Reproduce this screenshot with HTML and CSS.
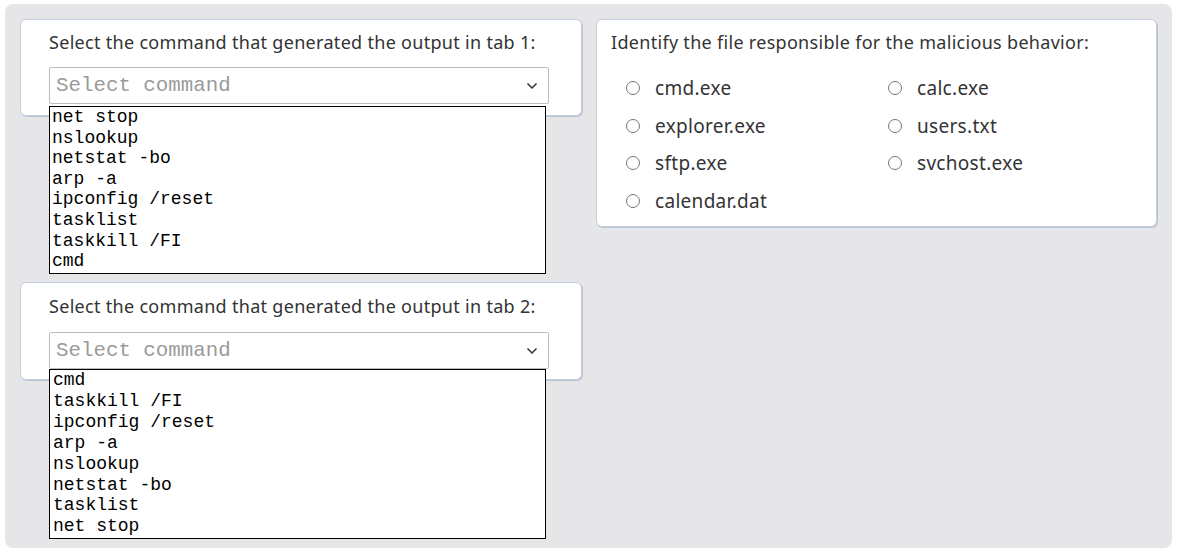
FILE: index.html
```html
<!DOCTYPE html>
<html lang="en">
<head>
    <meta charset="UTF-8">
    <meta name="viewport" content="width=device-width, initial-scale=1.0">
    <title>Select command</title>
    <link rel="stylesheet" href="styles.css">
</head>
<body>
    <div class="panel">
        <div class="col-left">
            <section class="card card-select">
                <p class="prompt">Select the command that generated the output in tab 1:</p>
                <div class="dropdown">
                    <div class="select">
                        <span>Select command</span>
                        <svg class="chevron" width="12" height="8" viewBox="0 0 12 8"><path d="M1.5 1.5 L6 6 L10.5 1.5" fill="none" stroke="#333" stroke-width="1.5"/></svg>
                    </div>
                    <ul class="options">
                        <li>net stop</li>
                        <li>nslookup</li>
                        <li>netstat -bo</li>
                        <li>arp -a</li>
                        <li>ipconfig /reset</li>
                        <li>tasklist</li>
                        <li>taskkill /FI</li>
                        <li>cmd</li>
                    </ul>
                </div>
            </section>
            <section class="card card-select card-second">
                <p class="prompt">Select the command that generated the output in tab 2:</p>
                <div class="dropdown">
                    <div class="select">
                        <span>Select command</span>
                        <svg class="chevron" width="12" height="8" viewBox="0 0 12 8"><path d="M1.5 1.5 L6 6 L10.5 1.5" fill="none" stroke="#333" stroke-width="1.5"/></svg>
                    </div>
                    <ul class="options">
                        <li>cmd</li>
                        <li>taskkill /FI</li>
                        <li>ipconfig /reset</li>
                        <li>arp -a</li>
                        <li>nslookup</li>
                        <li>netstat -bo</li>
                        <li>tasklist</li>
                        <li>net stop</li>
                    </ul>
                </div>
            </section>
        </div>
        <section class="card card-radios">
            <p class="prompt">Identify the file responsible for the malicious behavior:</p>
            <div class="choices">
                <label class="choice"><span class="radio"></span>cmd.exe</label>
                <label class="choice"><span class="radio"></span>calc.exe</label>
                <label class="choice"><span class="radio"></span>explorer.exe</label>
                <label class="choice"><span class="radio"></span>users.txt</label>
                <label class="choice"><span class="radio"></span>sftp.exe</label>
                <label class="choice"><span class="radio"></span>svchost.exe</label>
                <label class="choice"><span class="radio"></span>calendar.dat</label>
            </div>
        </section>
    </div>
</body>
</html>
```

FILE: styles.css
```css
:root {
    --panel-bg: #e6e6e9;
    --card-border: #c3d0e0;
    --text-color: #333333;
    --mono: 'Liberation Mono', 'Courier New', monospace;
}
* {
    box-sizing: border-box;
}
body {
    margin: 0;
    background: #ffffff;
    font-family: 'Noto Sans', 'DejaVu Sans', sans-serif;
    color: var(--text-color);
}
.panel {
    display: flex;
    gap: 14px;
    margin: 4px 0 0 5px;
    width: 1167px;
    height: 544px;
    padding: 15px;
    background: var(--panel-bg);
    border-radius: 8px;
}
.col-left {
    display: flex;
    flex-direction: column;
    gap: 166px;
    width: 562px;
}
.card {
    background: #ffffff;
    border: 1px solid var(--card-border);
    border-radius: 6px;
    box-shadow: 1px 1px 0 #b7c3d2;
}
.prompt {
    margin: 0;
    font-size: 18px;
    line-height: 22px;
    letter-spacing: 0.3px;
}
.card-select {
    height: 97px;
    padding: 11px 32px 0 28px;
}
.card-second {
    height: 98px;
    padding-top: 12px;
}
.dropdown {
    position: relative;
    margin-top: 14px;
}
.card-second .dropdown {
    margin-top: 15px;
}
.select {
    display: flex;
    align-items: center;
    justify-content: space-between;
    height: 37px;
    padding: 0 10px 0 6px;
    border: 1px solid #bdbdbd;
    border-radius: 2px;
    font-family: var(--mono);
    font-size: 20.8px;
    color: #9a9a9a;
}
.options {
    position: absolute;
    top: calc(100% + 2px);
    left: 0;
    width: 497px;
    margin: 0;
    padding: 0 0 1px 2px;
    list-style: none;
    background: #ffffff;
    border: 1px solid #000000;
    font-family: var(--mono);
    font-size: 18px;
    line-height: 20.6px;
    color: #000000;
    z-index: 2;
}
.card-second .options {
    top: 100%;
    padding-left: 3px;
    line-height: 20.9px;
}
.card-radios {
    width: 561px;
    height: 208px;
    padding: 11px 14px 0 14px;
}
.choices {
    display: grid;
    grid-template-columns: 262px 1fr;
    row-gap: 15.5px;
    margin-top: 24px;
    padding-left: 15px;
}
.choice {
    display: flex;
    align-items: center;
    gap: 15px;
    height: 22px;
    font-size: 19px;
    letter-spacing: 0.3px;
}
.radio {
    width: 14px;
    height: 14px;
    border: 1px solid #767676;
    border-radius: 50%;
    background: #ffffff;
}
```
